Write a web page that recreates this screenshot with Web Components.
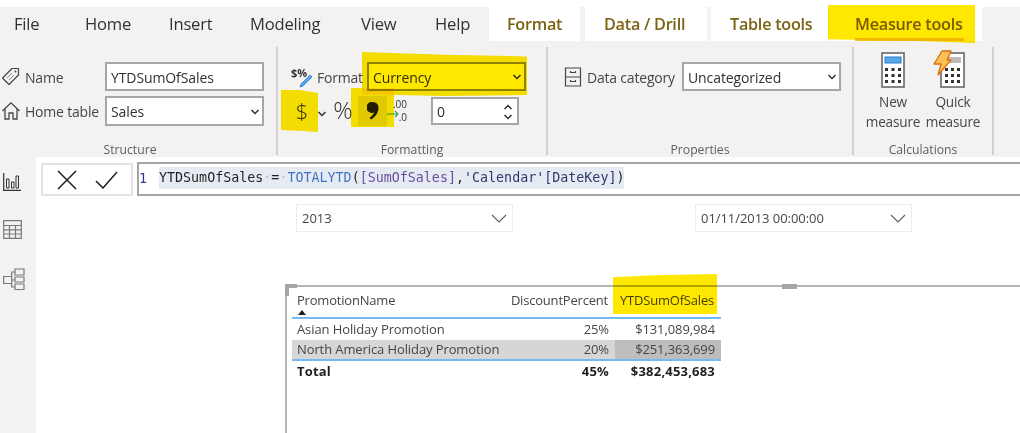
<!DOCTYPE html>
<html>
<head>
<meta charset="utf-8">
<title>Measure tools</title>
<style>
    html, body { margin: 0; height: 100%; overflow: hidden; background: #fff; }
    body { font-family: "Open Sans", "Noto Sans", sans-serif; color: #323130; }
    #app { position: relative; width: 1020px; height: 433px; overflow: hidden; }
</style>
</head>
<body>
<div id="app">
    <bi-ribbon></bi-ribbon>
    <div style="display:flex;height:276px">
        <side-rail></side-rail>
        <div style="flex:1;display:flex;flex-direction:column;min-width:0">
            <formula-bar></formula-bar>
            <report-canvas></report-canvas>
        </div>
    </div>
    <marker-stroke style="left:828px;top:5px;width:147px;height:38px;clip-path:polygon(0 0,100% 0,100% 100%,60% 95%,0 90%)"></marker-stroke>
    <marker-stroke style="left:362px;top:52px;width:165px;height:44px;clip-path:polygon(0 0,50% 6%,100% 10%,100% 98%,50% 100%,0 96%)"></marker-stroke>
    <marker-stroke style="left:281px;top:90px;width:37px;height:42px;clip-path:polygon(0 0,50% 0,100% 7%,100% 100%,50% 97%,0 95%)"></marker-stroke>
    <marker-stroke style="left:351px;top:88px;width:43px;height:39px"></marker-stroke>
    <marker-stroke style="left:613px;top:274px;width:104px;height:40px;clip-path:polygon(0 8%,40% 3%,100% 0,100% 100%,0 100%)"></marker-stroke>
</div>

<script>
// all the fonts used in the ribbon share one stack
const UI_FONT = '"Open Sans", "Noto Sans", sans-serif';
const CHEVRON = `<svg width="10" height="6" viewBox="0 0 10 6"><path d="M1.5 1l3.5 3.5L8.5 1" fill="none" stroke="#323130" stroke-width="1.5"/></svg>`;
const THIN_CHEVRON = `<svg width="16" height="9" viewBox="0 0 16 9"><path d="M1 1l7 7 7-7" fill="none" stroke="#605e5c" stroke-width="1.1"/></svg>`;

// highlighter strokes painted over the screenshot
class MarkerStroke extends HTMLElement {
    constructor() {
        super();
        this.attachShadow({ mode: 'open' });
    }

    connectedCallback() {
        this.shadowRoot.innerHTML = `
            <style>
                :host {
                    display: block;
                    position: absolute;
                    background: #ffe800;
                    mix-blend-mode: multiply;
                }
            </style>
        `;
    }
}

class RibbonTab extends HTMLElement {
    constructor() {
        super();
        this.attachShadow({ mode: 'open' });
    }

    connectedCallback() {
        this.shadowRoot.innerHTML = `
            <style>
                :host {
                    display: flex;
                    box-sizing: border-box;
                    height: 34px;
                    padding-bottom: 1px;
                    align-items: center;
                    font-size: 16.6px;
                    letter-spacing: -0.2px;
                    white-space: nowrap;
                    color: #323130;
                }
                :host([context]) {
                    background: #fff;
                    color: #7a6312;
                    font-weight: 600;
                    font-size: 16.2px;
                    letter-spacing: -0.25px;
                }
                :host([active]) { position: relative; }
                :host([active])::after {
                    content: '';
                    position: absolute;
                    left: 26px;
                    right: 18px;
                    bottom: 0;
                    height: 3px;
                    background: #f2c811;
                }
            </style>
            <slot></slot>
        `;
    }
}

class RibbonGroup extends HTMLElement {
    constructor() {
        super();
        this.attachShadow({ mode: 'open' });
    }

    connectedCallback() {
        this.shadowRoot.innerHTML = `
            <style>
                :host {
                    display: flex;
                    flex-direction: column;
                    box-sizing: border-box;
                    height: 108px;
                    border-right: 2px solid #d2d0ce;
                }
                .body { flex: 1; min-height: 0; }
                .label {
                    height: 16px;
                    margin-bottom: -3px;
                    padding-right: var(--label-inset, 0);
                    line-height: 16px;
                    text-align: center;
                    font-size: 12.2px;
                    color: #605e5c;
                }
            </style>
            <div class="body"><slot></slot></div>
            <div class="label">${this.getAttribute('label')}</div>
        `;
    }
}

class BiSelect extends HTMLElement {
    constructor() {
        super();
        this.attachShadow({ mode: 'open' });
    }

    connectedCallback() {
        this.shadowRoot.innerHTML = `
            <style>
                :host {
                    display: flex;
                    box-sizing: border-box;
                    width: 159px;
                    height: 29px;
                    align-items: center;
                    justify-content: space-between;
                    padding: 1px 2px 0 4px;
                    background: #fff;
                    border: 2px solid #a8a6a4;
                    font-size: 14px;
                    letter-spacing: -0.1px;
                    color: #323130;
                }
            </style>
            <slot></slot>
            ${this.hasAttribute('plain') ? '' : CHEVRON}
        `;
    }
}

class BiRibbon extends HTMLElement {
    constructor() {
        super();
        this.attachShadow({ mode: 'open' });
    }

    connectedCallback() {
        this.shadowRoot.innerHTML = `
            <style>
                :host {
                    display: block;
                    margin-top: 7px;
                    height: 150px;
                    background: #f3f2f1;
                    box-shadow: 0 1px 0 #e6e4e2;
                    font-family: ${UI_FONT};
                }
                .tabs { display: flex; height: 34px; }
                .groups { display: flex; padding-top: 6px; height: 110px; }
                .row { display: flex; align-items: center; }
                .lbl { font-size: 14px; letter-spacing: -0.2px; color: #484644; white-space: nowrap; padding-top: 1px; }
                .structure { width: 278px; padding-top: 15px; box-sizing: border-box; --label-inset: 16px; }
                .formatting { width: 270px; padding-top: 15px; box-sizing: border-box; }
                .properties { width: 306px; padding-top: 15px; box-sizing: border-box; }
                .calc { width: 140px; padding-top: 5px; box-sizing: border-box; }
                .stack { display: flex; flex-direction: column; gap: 5px; }
                .cmd {
                    display: flex;
                    flex-direction: column;
                    align-items: center;
                    width: 60px;
                    font-size: 13.6px;
                    line-height: 20px;
                    letter-spacing: -0.2px;
                    color: #484644;
                }
                .cmd svg { margin-bottom: 4px; display: block; }
            </style>
            <div class="tabs">
                <ribbon-tab style="margin-left:14px;width:71px">File</ribbon-tab>
                <ribbon-tab style="width:84px">Home</ribbon-tab>
                <ribbon-tab style="width:81px">Insert</ribbon-tab>
                <ribbon-tab style="width:111px">Modeling</ribbon-tab>
                <ribbon-tab style="width:74px">View</ribbon-tab>
                <ribbon-tab style="width:54px">Help</ribbon-tab>
                <ribbon-tab context style="width:91px;padding-left:18px;box-sizing:border-box">Format</ribbon-tab>
                <ribbon-tab context style="margin-left:5px;width:122px;padding-left:19px;box-sizing:border-box">Data / Drill</ribbon-tab>
                <ribbon-tab context style="margin-left:4px;width:117px;padding-left:19px;box-sizing:border-box">Table tools</ribbon-tab>
                <ribbon-tab context active style="margin-left:1px;width:153px;padding-left:26px;box-sizing:border-box">Measure tools</ribbon-tab>
            </div>
            <div class="groups">
                <ribbon-group label="Structure" class="structure">
                    <div class="stack">
                        <div class="row">
                            <svg width="20" height="20" viewBox="0 0 20 20" style="margin-left:1px"><path d="M11 1.5h6.5V8L8 17.5 1.5 11z" fill="none" stroke="#484644" stroke-width="1.2" stroke-linejoin="round"/><circle cx="14.5" cy="4.5" r="1" fill="#484644"/><path d="M6 11l5-5M8 13l5-5" stroke="#8a8886"/></svg>
                            <span class="lbl" style="width:84px;padding-left:4px;box-sizing:border-box">Name</span>
                            <bi-select plain style="width:159px;height:29px">YTDSumOfSales</bi-select>
                        </div>
                        <div class="row">
                            <svg width="20" height="20" viewBox="0 0 20 20" style="margin-left:1px"><path d="M1.5 10L10 1.8 18.5 10M4 8v10h4v-6h4v6h4V8" fill="none" stroke="#484644" stroke-width="1.3"/></svg>
                            <span class="lbl" style="width:84px;padding-left:4px;box-sizing:border-box">Home table</span>
                            <bi-select style="width:159px;height:30px">Sales</bi-select>
                        </div>
                    </div>
                </ribbon-group>
                <ribbon-group label="Formatting" class="formatting">
                    <div class="stack">
                        <div class="row" style="margin-left:13px">
                            <svg width="22" height="22" viewBox="0 0 22 22" style="overflow:visible"><text x="0" y="11" font-size="11" font-weight="700" fill="#323130" font-family="Open Sans">$%</text><path d="M19 9l2 2-9 9-3 1 1-3z" fill="#5aa7e6" stroke="#2b7cd3" stroke-width="0.8"/></svg>
                            <span class="lbl" style="width:54px;padding-left:4px;box-sizing:border-box">Format</span>
                            <bi-select style="width:159px;height:29px;border-color:#8f8f8f">Currency</bi-select>
                        </div>
                        <div class="row" style="height:30px">
                            <span style="width:48px;text-align:center;font-size:22px;font-weight:300;margin-top:-2px;color:#323130">$</span>
                            <span style="width:10px;margin-left:-9px;margin-right:0">${CHEVRON}</span>
                            <span style="width:32px;font-size:24px;font-weight:300;text-align:center;color:#323130;margin-top:-4px">%</span>
                            <span style="display:flex;width:29px;height:30px;background:#e1dfdd;justify-content:center;align-items:center;margin-left:-1px">
                                <svg width="12" height="18" viewBox="0 0 12 18"><path d="M6 0a5.500 5.500 0 0 1 5.500 5.500c0 5-3 9.500-7.500 12l-1.500-1.800c2.500-1.700 4-3.700 4.500-5.200A5.500 5.500 0 1 1 6 0z" fill="#201f1e"/></svg>
                            </span>
                            <svg width="20" height="28" viewBox="0 0 20 28"><text x="20" y="11" text-anchor="end" font-size="10" fill="#323130" font-family="Open Sans">.00</text><text x="20" y="24" text-anchor="end" font-size="10" fill="#323130" font-family="Open Sans">.0</text><path d="M0 17h11M8 14l3 3-3 3" fill="none" stroke="#2e9e6b" stroke-width="1.2"/></svg>
                            <bi-select plain style="width:88px;height:28px;margin-left:24px;">0<span style="display:flex;flex-direction:column;gap:4px;padding-right:2px"><svg width="10" height="6" viewBox="0 0 10 6"><path d="M1.500 5L5 1.500 8.500 5" fill="none" stroke="#323130" stroke-width="1.500"/></svg><svg width="10" height="6" viewBox="0 0 10 6"><path d="M1.500 1L5 4.500 8.500 1" fill="none" stroke="#323130" stroke-width="1.500"/></svg></span></bi-select>
                        </div>
                    </div>
                </ribbon-group>
                <ribbon-group label="Properties" class="properties">
                    <div class="row" style="margin-left:16px">
                        <svg width="18" height="20" viewBox="0 0 18 20"><path d="M1.500 1h15v18h-15zM1.500 10h15M6.500 4v1.500h5V4M6.500 13v1.500h5V13" fill="none" stroke="#484644" stroke-width="1.200"/></svg>
                        <span class="lbl" style="width:100px;padding-left:5px;box-sizing:border-box">Data category</span>
                        <bi-select>Uncategorized</bi-select>
                    </div>
                </ribbon-group>
                <ribbon-group label="Calculations" class="calc">
                    <div class="row" style="align-items:flex-start;margin-left:9px">
                        <div class="cmd">
                            <svg width="24" height="36" viewBox="0 0 24 36"><rect x="1" y="1" width="22" height="34" fill="#fff" stroke="#605e5c" stroke-width="1.500"/><rect x="4" y="5" width="16" height="6" fill="#5aa7e6" stroke="#2b7cd3"/><path d="M4 16h3v3H4zM10.500 16h3v3h-3zM17 16h3v3h-3zM4 22h3v3H4zM10.500 22h3v3h-3zM17 22h3v3h-3zM4 28h3v3H4zM10.500 28h3v3h-3zM17 28h3v3h-3z" fill="#323130"/></svg>
                            <span>New</span><span>measure</span>
                        </div>
                        <div class="cmd">
                            <svg width="32" height="38" viewBox="0 -2 32 38" style="margin-top:-2px;margin-right:9px"><rect x="8" y="1" width="23" height="34" fill="#fff" stroke="#605e5c" stroke-width="1.500"/><rect x="12" y="5" width="16" height="6" fill="#bdbbb9"/><path d="M12 16h3v3h-3zM18 16h3v3h-3zM24 16h3v3h-3zM12 22h3v3h-3zM18 22h3v3h-3zM24 22h3v3h-3zM12 28h3v3h-3zM18 28h3v3h-3zM24 28h3v3h-3z" fill="#323130"/><path d="M9 -1h9l-4 9h4L5 23l3-11H1z" fill="#fbc056" stroke="#d9730d" stroke-width="1.300" stroke-linejoin="round"/></svg>
                            <span>Quick</span><span>measure</span>
                        </div>
                    </div>
                </ribbon-group>
            </div>
        `;
    }
}

class SideRail extends HTMLElement {
    constructor() {
        super();
        this.attachShadow({ mode: 'open' });
    }

    connectedCallback() {
        this.shadowRoot.innerHTML = `
            <style>
                :host {
                    display: flex;
                    flex-direction: column;
                    box-sizing: border-box;
                    width: 36px;
                    padding: 16px 0 0 3px;
                    gap: 29px;
                    background: #f3f2f1;
                }
                svg { display: block; }
            </style>
            <svg width="18" height="18" viewBox="0 0 18 18"><path d="M.7 0v17.300H18" fill="none" stroke="#323130" stroke-width="1.200"/><path d="M3.500 6h2.500v9H3.500zM8.500 9h2.500v6H8.500zM13 3h2.500v12H13z" fill="none" stroke="#323130"/></svg>
            <svg width="19" height="19" viewBox="0 0 19 19"><path d="M.7.700h17.600v17.600H.7zM.7 5.500h17.600M.7 9.800h17.600M.7 14h17.600M6.500 5.500v12.800M12.500 5.500v12.800" fill="none" stroke="#7a7876" stroke-width="1.200"/></svg>
            <svg width="22" height="22" viewBox="0 0 22 22"><path d="M.7 8.500h8v7h-8zM12 1h9v6h-9zM12 9h9v5h-9zM12 16h9v5.500h-9zM8.700 12H12M8.700 9V4H12M8.700 15v4H12" fill="none" stroke="#7a7876" stroke-width="1.200"/></svg>
        `;
    }
}

class FormulaBar extends HTMLElement {
    constructor() {
        super();
        this.attachShadow({ mode: 'open' });
    }

    connectedCallback() {
        this.shadowRoot.innerHTML = `
            <style>
                :host {
                    display: flex;
                    box-sizing: border-box;
                    height: 39px;
                    padding: 5px 0 0 5px;
                    gap: 4px;
                    background: #fff;
                }
                .actions {
                    display: flex;
                    box-sizing: border-box;
                    width: 92px;
                    height: 33px;
                    margin-top: 1px;
                    align-items: center;
                    justify-content: center;
                    gap: 18px;
                    border: 2px solid #e4e3e1;
                }
                .editor {
                    flex: 1;
                    display: flex;
                    box-sizing: border-box;
                    height: 34px;
                    padding-bottom: 2px;
                    align-items: center;
                    border: 2px solid #a8a6a4;
                    border-right: 0;
                    font-family: "DejaVu Sans Mono", "Liberation Mono", monospace;
                    font-size: 13.340px;
                    white-space: pre;
                }
                .ln { width: 20px; box-sizing: border-box; color: #2b3a8f; }
                .code { background: #e6ebf3; line-height: 22px; color: #201f1e; }
                .fn { color: #4472c4; }
                .col { color: #6b4f9e; }
                .tbl { color: #2c3a6b; }
                .dot { color: #b5bac4; }
            </style>
            <div class="actions">
                <svg width="20" height="20" viewBox="0 0 20 20"><path d="M1 1l18 18M19 1L1 19" stroke="#201f1e" stroke-width="1.500" fill="none"/></svg>
                <svg width="23" height="18" viewBox="0 0 23 18"><path d="M1 10l7 7L22 1" stroke="#201f1e" stroke-width="1.500" fill="none"/></svg>
            </div>
            <div class="editor">
                <span class="ln">1</span><span class="code">YTDSumOfSales<span class="dot">·</span>=<span class="dot">·</span><span class="fn">TOTALYTD</span>(<span class="col">[SumOfSales]</span>,<span class="tbl">'Calendar'[DateKey]</span>)</span>
            </div>
        `;
    }
}

class ReportSlicer extends HTMLElement {
    constructor() {
        super();
        this.attachShadow({ mode: 'open' });
    }

    connectedCallback() {
        this.shadowRoot.innerHTML = `
            <style>
                :host {
                    display: flex;
                    position: absolute;
                    box-sizing: border-box;
                    width: 217px;
                    height: 28px;
                    padding: 0 5px;
                    align-items: center;
                    justify-content: space-between;
                    border: 1px solid #ececec;
                    font-size: 13px;
                    letter-spacing: -0.05px;
                    color: #484644;
                }
            </style>
            <slot></slot>
            ${THIN_CHEVRON}
        `;
    }
}

class ReportCanvas extends HTMLElement {
    constructor() {
        super();
        this.attachShadow({ mode: 'open' });
    }

    connectedCallback() {
        this.shadowRoot.innerHTML = `
            <style>
                :host {
                    display: block;
                    position: relative;
                    flex: 1;
                    background: #fff;
                }
            </style>
            <report-slicer style="left:260px;top:8px">2013</report-slicer>
            <report-slicer style="left:659px;top:8px">01/11/2013 00:00:00</report-slicer>
            <matrix-visual style="left:249px;top:89px"></matrix-visual>
        `;
    }
}

class MatrixVisual extends HTMLElement {
    constructor() {
        super();
        this.attachShadow({ mode: 'open' });
    }

    connectedCallback() {
        this.shadowRoot.innerHTML = `
            <style>
                :host {
                    display: block;
                    position: absolute;
                    box-sizing: border-box;
                    width: 735px;
                    height: 150px;
                    padding: 0 0 0 5px;
                    border-top: 2px solid #b4b4b4;
                    border-left: 2px solid #b4b4b4;
                    font-size: 13px;
                    letter-spacing: -0.1px;
                    color: #484644;
                }
                .corner { position: absolute; left: -2px; top: -3px; width: 12px; height: 12px; background: #a6a6a6; }
                .corner::after { content: ''; position: absolute; left: 4px; top: 4px; width: 8px; height: 8px; background: #fff; }
                .mid { position: absolute; left: 495px; top: -3px; width: 15px; height: 5px; background: #a6a6a6; }
                .grid { display: grid; grid-template-columns: 207px 116px 106px; width: 429px; }
                .cell { display: flex; box-sizing: border-box; height: 21px; padding: 0 6px 1px 5px; align-items: center; white-space: nowrap; }
                .num { justify-content: flex-end; }
                .head { height: 32px; align-items: flex-start; padding-top: 4px; position: relative; letter-spacing: -0.2px; }
                .head.num { padding-right: 7px; }
                .head, .last { border-bottom: 2px solid #75b8f5; }
                .sel { background: #d6d6d6; }
                .sel2 { background: #bdbdbd; }
                .tot { font-weight: 700; color: #201f1e; letter-spacing: 0.2px; }
                .sort { position: absolute; left: 6px; top: 23px; width: 0; height: 0; border: 4.500px solid transparent; border-top: 0; border-bottom: 5px solid #201f1e; }
            </style>
            <div class="corner"></div>
            <div class="mid"></div>
            <div class="grid">
                <div class="cell head">PromotionName<span class="sort"></span></div>
                <div class="cell head num">DiscountPercent</div>
                <div class="cell head num">YTDSumOfSales</div>
                <div class="cell">Asian Holiday Promotion</div>
                <div class="cell num">25%</div>
                <div class="cell num">$131,089,984</div>
                <div class="cell sel last">North America Holiday Promotion</div>
                <div class="cell sel last num">20%</div>
                <div class="cell sel2 last num">$251,363,699</div>
                <div class="cell tot">Total</div>
                <div class="cell tot num">45%</div>
                <div class="cell tot num">$382,453,683</div>
            </div>
        `;
    }
}

customElements.define('marker-stroke', MarkerStroke);
customElements.define('ribbon-tab', RibbonTab);
customElements.define('ribbon-group', RibbonGroup);
customElements.define('bi-select', BiSelect);
customElements.define('bi-ribbon', BiRibbon);
customElements.define('side-rail', SideRail);
customElements.define('formula-bar', FormulaBar);
customElements.define('report-slicer', ReportSlicer);
customElements.define('report-canvas', ReportCanvas);
customElements.define('matrix-visual', MatrixVisual);
</script>
</body>
</html>
